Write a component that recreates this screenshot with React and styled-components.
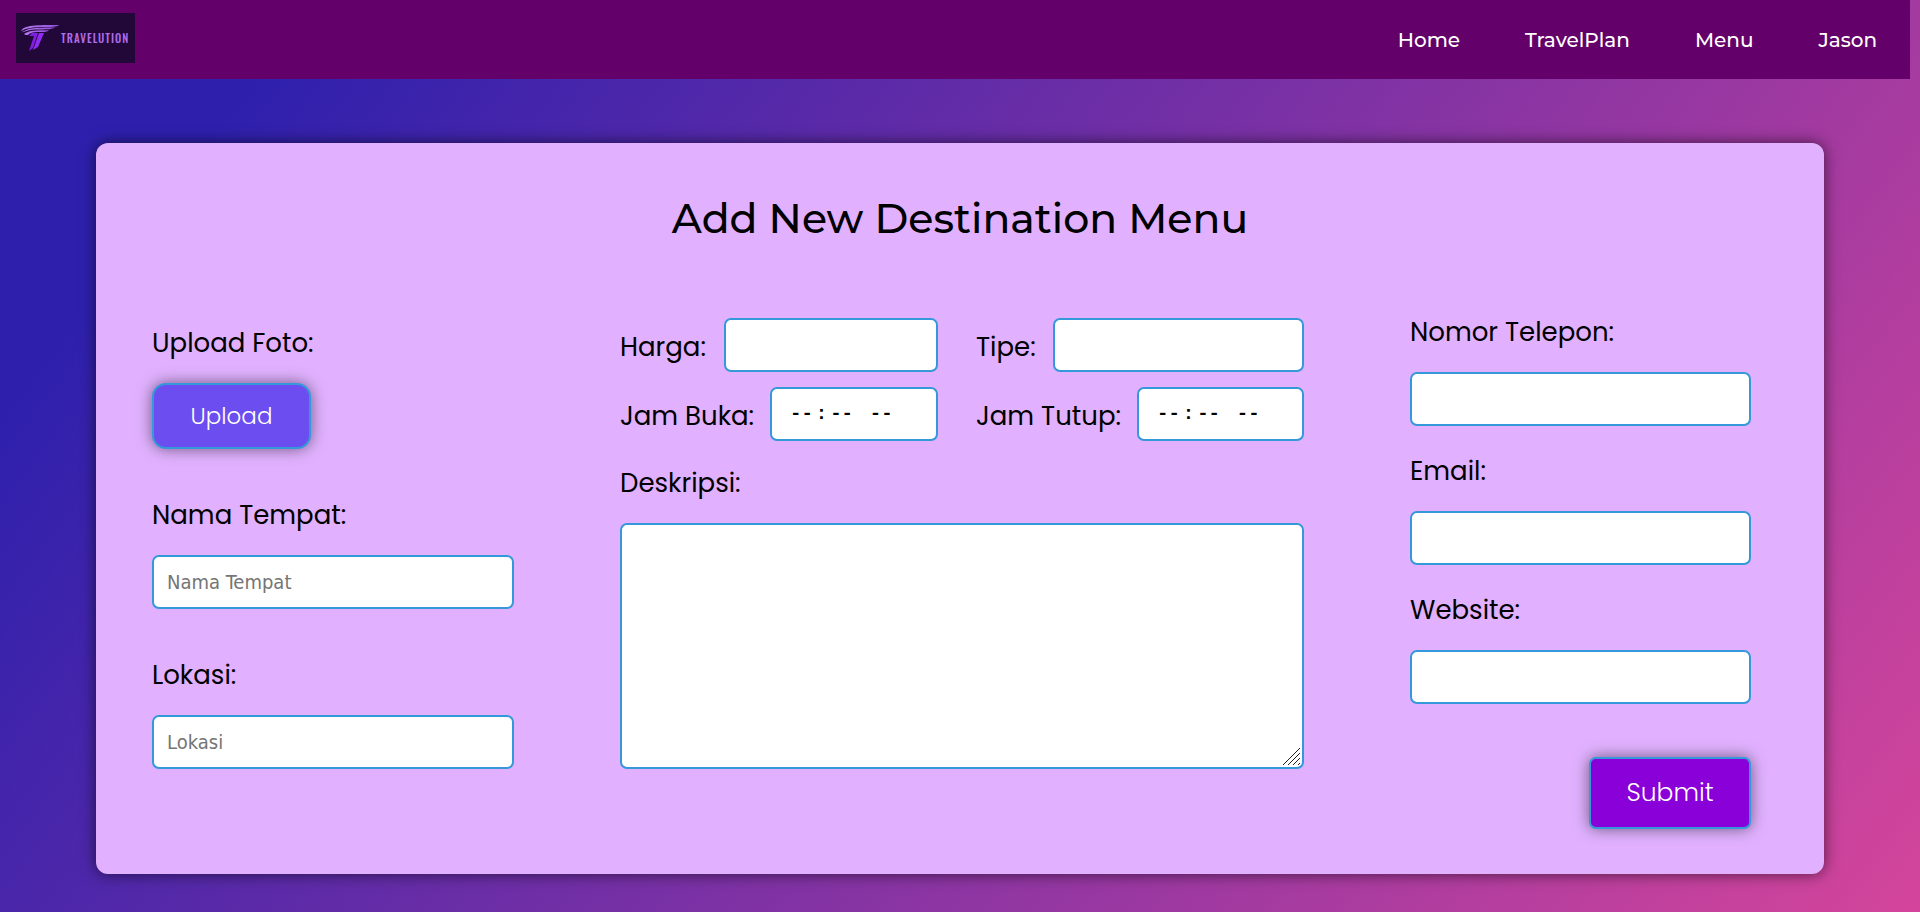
import React from 'react';
import styled, { createGlobalStyle } from 'styled-components';

const GlobalStyle = createGlobalStyle`
  *, *::before, *::after { box-sizing: border-box; }
  html, body { margin: 0; min-height: 100vh; }
  body {
    background: linear-gradient(127deg, #2e20ad 12%, #d4459b 100%) fixed;
    font-family: Poppins, Inter, sans-serif;
    color: #000;
  }
`;

const NavBar = styled.header`
  display: flex;
  align-items: center;
  justify-content: space-between;
  height: 79px;
  margin-right: 10px;
  padding: 0 33px 0 16px;
  background: #63006a;
`;

const LogoLink = styled.a`
  display: flex;
  align-items: center;
  gap: 2px;
  width: 119px;
  height: 50px;
  margin-bottom: 3px;
  padding-left: 5px;
  background: #210839;
  color: #b06be8;
  font: 500 11px 'Oswald', 'Roboto Condensed', 'DejaVu Sans Condensed', sans-serif;
  letter-spacing: 1px;
  text-decoration: none;

  svg { flex: none; }
`;

const NavLinks = styled.nav`
  display: flex;
  gap: 65px;
`;

const NavLink = styled.a`
  color: #fff;
  font: 500 20px/28px Montserrat, Inter, sans-serif;
  text-decoration: none;
`;

const Card = styled.main`
  margin: 64px 5% 38px;
  padding: 47px 73px 45px 56px;
  border-radius: 12px;
  background: #e1b1ff;
  box-shadow: 0 0 15px rgba(0, 0, 0, 0.6);
`;

const Title = styled.h1`
  margin: 0 -17px 65px 0;
  font: 500 41px/56px Montserrat, Inter, sans-serif;
  text-align: center;
`;

const Columns = styled.form`
  display: grid;
  grid-template-columns: 362fr 684fr 341fr;
  column-gap: 106px;
`;

const Column = styled.div`
  display: flex;
  flex-direction: column;
  gap: ${(p) => p.$gap}px;
  padding-top: ${(p) => p.$top || 0}px;
`;

const Field = styled.div`
  display: flex;
  flex-direction: column;
  align-items: flex-start;
  gap: 22px;
`;

const Label = styled.label`
  flex: 0 0 ${(p) => (p.$width ? `${p.$width}px` : 'auto')};
  height: 39px;
  padding-top: 2px;
  font-size: 26px;
  line-height: 39px;
  white-space: nowrap;
`;

const Input = styled.input`
  flex: ${(p) => (p.$grow ? '1' : 'none')};
  width: 100%;
  min-width: 0;
  height: 54px;
  padding: 0 13px;
  border: 2px solid #3498db;
  border-radius: 7px;
  background: #fff;
  color: #000;
  font: 20px 'DejaVu Sans Condensed', 'Noto Sans', sans-serif;

  &::placeholder { color: #757575; opacity: 1; }
`;

const TimeInput = styled(Input)`
  padding: 0 17px;
  font: 700 19px 'Liberation Mono', monospace;

  &::-webkit-calendar-picker-indicator { display: none; }
  &::-webkit-datetime-edit-hour-field { padding-right: 3px; }
  &::-webkit-datetime-edit-minute-field { padding-left: 3px; }
  &::-webkit-datetime-edit-ampm-field { padding-left: 10px; }
`;

const gripIcon = encodeURIComponent(
  '<svg xmlns="http://www.w3.org/2000/svg" width="19" height="19"><path d="M0 17L17 0M5 17L17 5M10 17L17 10M15 17L17 15" stroke="#222" fill="none"/></svg>'
);

const TextArea = styled.textarea`
  display: block;
  width: 100%;
  height: 246px;
  padding: 13px;
  border: 2px solid #3498db;
  border-radius: 7px;
  background: #fff url("data:image/svg+xml,${gripIcon}") no-repeat right bottom;
  font: 20px 'DejaVu Sans Condensed', 'Noto Sans', sans-serif;
  resize: both;

  &::-webkit-resizer { background: transparent; }
`;

const PairGrid = styled.div`
  display: grid;
  grid-template-columns: 318fr 328fr;
  gap: 15px 38px;
`;

const InlineField = styled.div`
  display: flex;
  align-items: center;
`;

const Button = styled.button`
  border: 2px solid #3498db;
  color: #fff;
  font-family: Poppins, Inter, sans-serif;
  font-weight: 300;
  box-shadow: 0 0 15px rgba(0, 0, 0, 0.5);
  cursor: pointer;
`;

const UploadButton = styled(Button)`
  width: 159px;
  height: 66px;
  border-radius: 14px;
  background: #6c4df0;
  font-size: 23px;
`;

const SubmitButton = styled(Button)`
  align-self: flex-end;
  width: 162px;
  height: 72px;
  margin-top: 29px;
  border-radius: 7px;
  background: #8a00d8;
  font-size: 25px;
`;

function LogoMark() {
  return (
    <svg width="38" height="28" viewBox="0 0 38 28" aria-hidden="true">
      <defs>
        <linearGradient id="wing" x1="0" x2="1" y1="0" y2="0">
          <stop offset="0" stopColor="#b77bf0" />
          <stop offset="1" stopColor="#8f4fd8" />
        </linearGradient>
      </defs>
      <path d="M0 7C3 1 15 1 38 1C36 3 30 3 22 3C12 3 6 4 0 7Z" fill="url(#wing)" />
      <path d="M1 8.500C7 4 15 3.600 34 3.600C31 5.500 25 5.500 20 5.500C11 5.500 7 6 1 8.500Z" fill="url(#wing)" />
      <path d="M3 10C8 6.500 12 6 28 6.200C26 8 24 8 21 8C13 8 9 8.500 7 11C5 11 4 11 3 10Z" fill="url(#wing)" />
      <path d="M11 9H17L12 24L8 27L13 12H8Z" fill="#7f1fe0" />
      <path d="M18 9H23L17 23L12 26Z" fill="#8f2cf0" />
    </svg>
  );
}

const navItems = ['Home', 'TravelPlan', 'Menu', 'Jason'];

const contactFields = [
  { id: 'telepon', label: 'Nomor Telepon:', type: 'tel' },
  { id: 'email', label: 'Email:', type: 'email' },
  { id: 'website', label: 'Website:', type: 'url' },
];

export default function App() {
  return (
    <>
      <GlobalStyle />
      <NavBar>
        <LogoLink href="#home">
          <LogoMark />
          TRAVELUTION
        </LogoLink>
        <NavLinks>
          {navItems.map((item) => (
            <NavLink key={item} href={`#${item.toLowerCase()}`}>{item}</NavLink>
          ))}
        </NavLinks>
      </NavBar>
      <Card>
        <Title>Add New Destination Menu</Title>
        <Columns onSubmit={(e) => e.preventDefault()}>
          <Column $gap={45} $top={11}>
            <Field>
              <Label htmlFor="upload">Upload Foto:</Label>
              <UploadButton id="upload" type="button">Upload</UploadButton>
            </Field>
            <Field>
              <Label htmlFor="nama">Nama Tempat:</Label>
              <Input id="nama" type="text" placeholder="Nama Tempat" />
            </Field>
            <Field>
              <Label htmlFor="lokasi">Lokasi:</Label>
              <Input id="lokasi" type="text" placeholder="Lokasi" />
            </Field>
          </Column>
          <Column $gap={21} $top={7}>
            <PairGrid>
              <InlineField>
                <Label $width={104} htmlFor="harga">Harga:</Label>
                <Input $grow id="harga" type="text" />
              </InlineField>
              <InlineField>
                <Label $width={77} htmlFor="tipe">Tipe:</Label>
                <Input $grow id="tipe" type="text" />
              </InlineField>
              <InlineField>
                <Label $width={150} htmlFor="buka">Jam Buka:</Label>
                <TimeInput $grow id="buka" type="time" />
              </InlineField>
              <InlineField>
                <Label $width={161} htmlFor="tutup">Jam Tutup:</Label>
                <TimeInput $grow id="tutup" type="time" />
              </InlineField>
            </PairGrid>
            <Field>
              <Label htmlFor="deskripsi">Deskripsi:</Label>
              <TextArea id="deskripsi" />
            </Field>
          </Column>
          <Column $gap={24}>
            {contactFields.map((f) => (
              <Field key={f.id}>
                <Label htmlFor={f.id}>{f.label}</Label>
                <Input id={f.id} type={f.type} />
              </Field>
            ))}
            <SubmitButton type="submit">Submit</SubmitButton>
          </Column>
        </Columns>
      </Card>
    </>
  );
}
